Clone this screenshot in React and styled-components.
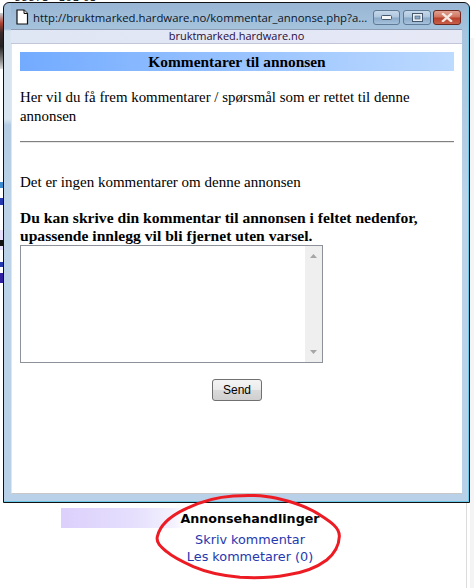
import React from 'react';
import styled, { createGlobalStyle } from 'styled-components';

const Global = createGlobalStyle`
  html, body { margin: 0; padding: 0; background: #fff; }
  #root { width: 474px; height: 588px; overflow: hidden; }
`;

const Page = styled.div`
  position: relative;
  width: 474px;
  height: 588px;
  overflow: hidden;
  background: #fff;
`;

const BehindText = styled.div`
  position: absolute;
  left: 14px;
  top: -9px;
  font: 11px "DejaVu Sans", sans-serif;
  color: #222;
`;

const BehindPhoto = styled.div`
  position: absolute;
  left: 0;
  top: 13px;
  width: 4px;
  height: 56px;
  background: linear-gradient(180deg, #c8d0d6 0%, #b04030 18%, #3a2a2a 35%, #222 60%, #8a8a8a 85%, #ddd 100%);
`;

const BehindStrip = styled.div`
  position: absolute;
  right: 0;
  top: 38px;
  width: 4px;
  bottom: 0;
  background: #f4f4f4;
`;

const BehindMark = styled.div`
  position: absolute;
  left: 0;
  top: ${(p) => p.$top}px;
  width: 3px;
  height: ${(p) => p.$h}px;
  background: ${(p) => p.$color};
`;

const Window = styled.div`
  position: absolute;
  left: 3px;
  top: 2px;
  width: 467px;
  height: 501px;
  box-sizing: border-box;
  border: 1px solid #111;
  border-radius: 6px 6px 0 0;
  box-shadow: inset -1px -1px 0 #6cc8e8;
  background:
    linear-gradient(180deg, #a4bfda 0, #a4bfda 26px, #d8e5f1 28px, #d8e5f1 116px, rgba(216, 229, 241, 0) 122px) left top / 7px 100% no-repeat,
    linear-gradient(180deg, #98b6d4 0%, #a8c4de 6%, #bcd3e8 40%, #b9d1e8 100%);
  display: flex;
  flex-direction: column;
  padding: 0 7px 8px 7px;
`;

const TitleBar = styled.div`
  height: 26px;
  flex: none;
  display: flex;
  align-items: center;
  padding-top: 2px;
  box-sizing: border-box;
`;

const PageIcon = styled.svg`
  width: 14px;
  height: 16px;
  margin: 0 4px 0 4px;
  flex: none;
`;

const TitleText = styled.div`
  font: 11.35px "Open Sans", "DejaVu Sans", sans-serif;
  color: #0c1626;
  white-space: nowrap;
  flex: none;
`;

const WinButtons = styled.div`
  display: flex;
  gap: 2px;
  margin-left: auto;
  margin-right: 1px;
`;

const WinButton = styled.div`
  box-sizing: border-box;
  width: ${(p) => (p.$wide ? 28 : 27)}px;
  height: 15px;
  margin-right: ${(p) => (p.$first ? 1 : 0)}px;
  border: 1px solid ${(p) => (p.$close ? '#6e2a20' : '#5f7a96')};
  border-radius: 3px;
  display: flex;
  align-items: center;
  justify-content: center;
  background: ${(p) =>
    p.$close
      ? 'linear-gradient(180deg, #e0a090 0%, #d07560 45%, #b8402c 55%, #c8604a 100%)'
      : 'linear-gradient(180deg, #c6d8ea 0%, #afc7de 45%, #8ba9c8 55%, #a6c2dc 100%)'};
`;

const HostBar = styled.div`
  height: 15px;
  flex: none;
  box-sizing: border-box;
  border-top: 1px solid #8e9db4;
  border-bottom: 1px solid #c2c6d8;
  background: linear-gradient(90deg, #dfe6f4 0%, #e6e8f6 100%);
  font: 11px/12px "Open Sans", "DejaVu Sans", sans-serif;
  color: #2a0a3a;
  text-align: center;
`;

const Client = styled.div`
  flex: 1;
  background: #fff;
  border-left: 1px solid #dfe6ee;
  border-bottom: 1px solid #c8c8c8;
  padding: 8px 8px 0 8px;
  font-family: "Liberation Serif", "Times New Roman", serif;
  color: #000;
`;

const Heading = styled.div`
  height: 19px;
  background: linear-gradient(90deg, #73abff 0%, #bddaff 100%);
  font-weight: bold;
  font-size: 15.4px;
  line-height: 19px;
  text-align: center;
`;

const Intro = styled.p`
  margin: 17px 0 0;
  font-size: 14.9px;
  line-height: 19px;
`;

const Rule = styled.hr`
  margin: 15px 0 0;
  border: none;
  border-top: 1px solid #808080;
  border-bottom: 1px solid #e8e8e8;
`;

const Notice = styled.p`
  margin: 30px 0 0;
  font-size: 15px;
  line-height: 19px;
`;

const Prompt = styled.p`
  margin: 17px 0 0;
  font-weight: bold;
  font-size: 15.6px;
  line-height: 18px;
`;

const TextBox = styled.div`
  width: 303px;
  height: 118px;
  box-sizing: border-box;
  border: 1px solid #8c919a;
  display: flex;
  justify-content: flex-end;
  background: #fff;
`;

const ScrollTrack = styled.div`
  width: 17px;
  background: #efefef;
  display: flex;
  flex-direction: column;
  justify-content: space-between;
  align-items: center;
  padding: 8px 0;
  box-sizing: border-box;
`;

const SendRow = styled.div`
  display: flex;
  justify-content: center;
  width: 434px;
  margin-top: 16px;
`;

const SendButton = styled.button`
  width: 50px;
  height: 22px;
  padding: 0;
  border: 1px solid #707070;
  border-radius: 3px;
  background: linear-gradient(180deg, #f4f4f4 0%, #ebebeb 48%, #dadada 52%, #cfcfcf 100%);
  font: 12px "Liberation Sans", Arial, sans-serif;
  color: #000;
`;

const Below = styled.div`
  position: absolute;
  left: 0;
  top: 503px;
  width: 467px;
  height: 85px;
  box-sizing: border-box;
  border-right: 1px solid #dcdcdc;
  padding: 5px 0 0 61px;
`;

const ActionsHead = styled.div`
  width: 378px;
  height: 20px;
  background: linear-gradient(90deg, #dcd0fc 0%, #e6e0fd 20%, #f4f2fe 30%, #ffffff 33%);
  font: bold 12.7px/21px "DejaVu Sans", Verdana, sans-serif;
  color: #000;
  text-align: center;
`;

const ActionLinks = styled.div`
  width: 378px;
  text-align: center;
  margin-top: 3px;
  font: 12.8px/17px "DejaVu Sans", Verdana, sans-serif;
  color: #2438b0;
`;

const RedRing = styled.svg`
  position: absolute;
  left: 150px;
  top: 490px;
  width: 200px;
  height: 98px;
`;

function ScrollArrow({ up }) {
  return (
    <svg width="7" height="4" viewBox="0 0 7 4">
      <path d={up ? 'M0 4 L3.5 0 L7 4 Z' : 'M0 0 L3.5 4 L7 0 Z'} fill="#a6a6a6" />
    </svg>
  );
}

export default function App() {
  return (
    <Page>
      <Global />
      <BehindText>88873=101 03</BehindText>
      <BehindPhoto />
      <BehindStrip />
      <BehindMark $top={182} $h={6} $color="#3a8ad0" />
      <BehindMark $top={198} $h={7} $color="#2438b0" />
      <BehindMark $top={230} $h={20} $color="#e8e0fc" />
      <BehindMark $top={240} $h={6} $color="#111" />
      <BehindMark $top={262} $h={5} $color="#2438b0" />
      <BehindMark $top={273} $h={10} $color="#3020a0" />
      <Window>
        <TitleBar>
          <PageIcon viewBox="0 0 14 16">
            <path d="M2 1 H9 L12.5 4.5 V15 H2 Z" fill="#fff" stroke="#111" strokeWidth="1.2" />
            <path d="M9 1 V4.5 H12.5" fill="#ddd" stroke="#111" strokeWidth="1" />
          </PageIcon>
          <TitleText>http://bruktmarked.hardware.no/kommentar_annonse.php?a...</TitleText>
          <WinButtons>
            <WinButton $first>
              <svg width="11" height="6" viewBox="0 0 11 6">
                <rect x="0.5" y="1.5" width="10" height="4" rx="1" fill="#f4f6f8" stroke="#44586e" />
              </svg>
            </WinButton>
            <WinButton $wide>
              <svg width="11" height="9" viewBox="0 0 11 9">
                <rect x="0.5" y="0.5" width="10" height="8" fill="#e8eef4" stroke="#44586e" />
                <rect x="3" y="3" width="5" height="3" fill="#8ba9c8" stroke="#44586e" strokeWidth="0.6" />
              </svg>
            </WinButton>
            <WinButton $wide $close>
              <svg width="12" height="9" viewBox="0 0 12 9">
                <path d="M2 1 L10 8 M10 1 L2 8" stroke="#f4e6e0" strokeWidth="2.4" strokeLinecap="square" />
              </svg>
            </WinButton>
          </WinButtons>
        </TitleBar>
        <HostBar>bruktmarked.hardware.no</HostBar>
        <Client>
          <Heading>Kommentarer til annonsen</Heading>
          <Intro>
            Her vil du få frem kommentarer / spørsmål som er rettet til denne
            <br />
            annonsen
          </Intro>
          <Rule />
          <Notice>Det er ingen kommentarer om denne annonsen</Notice>
          <Prompt>
            Du kan skrive din kommentar til annonsen i feltet nedenfor,
            <br />
            upassende innlegg vil bli fjernet uten varsel.
          </Prompt>
          <TextBox>
            <ScrollTrack>
              <ScrollArrow up />
              <ScrollArrow />
            </ScrollTrack>
          </TextBox>
          <SendRow>
            <SendButton>Send</SendButton>
          </SendRow>
        </Client>
      </Window>
      <Below>
        <ActionsHead>Annonsehandlinger</ActionsHead>
        <ActionLinks>
          Skriv kommentar
          <br />
          Les kommetarer (0)
        </ActionLinks>
      </Below>
      <RedRing viewBox="0 0 200 98">
        <path
          d="M7.3 46.7 C10 34 22 25 36.7 18.3 C52 11 68 7 83.3 6 C98 5 113 5 126.7 8.3 C143 12 158 17 170 25 C181 32 190 38 189.3 46.7 C189 56 185 63 176.7 70 C166 78 152 83 136.7 85 C121 88 105 88 90 87.3 C74 86 58 83 43.3 76.7 C33 72 24 68 16.7 61.7 C11 57 6 53 7.3 46.7 Z"
          fill="none"
          stroke="#ed1c24"
          strokeWidth="3"
        />
      </RedRing>
    </Page>
  );
}
